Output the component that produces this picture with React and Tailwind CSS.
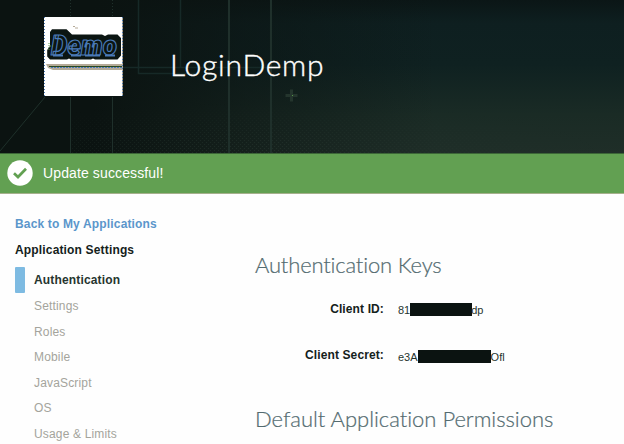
const links = ["Settings", "Roles", "Mobile", "JavaScript", "OS", "Usage & Limits"];

function DemoLogo() {
  return (
    <svg width="79" height="79" viewBox="0 0 79 79" className="block bg-white">
      <path d="M8 12.300H22.500L28 17.500H58L61 19L64 17.500H73.500L77 21V38.500L73.500 42.500H51L49 41.500L47 42.500H27L25 41.500L23 42.500H6L3.200 39.500V33L6 29V15z" fill="#0b1512" />
      <g fontFamily='"Roboto", sans-serif' fontWeight="900" fontStyle="italic">
        <text x="7" y="37.500" fontSize="28" textLength="66" lengthAdjust="spacingAndGlyphs" fill="#0b1512" stroke="#4a7ab8" strokeWidth="1.200" strokeLinejoin="round">Demo</text>
      </g>
      <path d="M9 38.500h10M27 38.500h10M41 38.500h15M61 38.500h10" stroke="#4a7ab8" strokeWidth="2" />
      <path d="M5 26v8M6 29h3" stroke="#569646" strokeDasharray="1 1" />
      <path d="M29 9.500h2M31 11h3" stroke="#b5aa98" />
      <path d="M2 47h76v6H9l-5-2z" fill="#b5aa98" />
      <path d="M5 49.500h73" stroke="#28491f" />
      <path d="M7 50.500h71" stroke="#4a7ab8" strokeDasharray="2 1" />
      <path d="M78.500 0v79" stroke="#b5aa98" />
      <path d="M.5 0v79M78.500 0v79" stroke="#4a7ab8" strokeDasharray="1 2" />
    </svg>
  );
}

function HeaderArt() {
  return (
    <svg width="624" height="153" className="absolute inset-0">
      <defs>
        <linearGradient id="depth" x1="0" y1="0" x2="0" y2="1">
          <stop offset="0" stopColor="#0b1616" />
          <stop offset=".15" stopColor="#0e1f20" />
          <stop offset=".42" stopColor="#0f2121" />
          <stop offset=".75" stopColor="#1a2b25" />
          <stop offset="1" stopColor="#1f2e28" />
        </linearGradient>
        <linearGradient id="shade" x1="0" y1="0" x2="1" y2="0">
          <stop offset=".15" stopColor="#0b1311" />
          <stop offset=".4" stopColor="#0b1311" stopOpacity=".5" />
          <stop offset=".7" stopColor="#0b1311" stopOpacity="0" />
        </linearGradient>
        <pattern id="grain" width="4" height="4" patternUnits="userSpaceOnUse">
          <path d="M0 0h1v1H0zM2 2h1v1H2z" fill="#2a3b33" />
        </pattern>
        <radialGradient id="glow" cx=".35" cy="1" r=".6">
          <stop offset="0" stopColor="#999" />
          <stop offset="1" stopColor="#000" />
        </radialGradient>
        <mask id="grainMask">
          <rect x="70" y="70" width="554" height="83" fill="url(#glow)" />
        </mask>
      </defs>
      <rect width="624" height="153" fill="url(#depth)" />
      <rect width="624" height="153" fill="url(#shade)" />
      <rect width="624" height="153" fill="url(#grain)" mask="url(#grainMask)" />
      <g fill="none" stroke="#1f302b">
        <path d="M70.500 97v56M112.500 97v56M0 151L45 97" />
        <path d="M70.500 0v16M112.500 0v16" strokeDasharray="1 2" />
        <path d="M138.500 0v73.500H200M180.500 0v67M123 67.500h172" stroke="#162927" strokeWidth="1.500" />
        <path d="M229 0v153M271 0v153" strokeWidth="2" />
        <path d="M285.500 95.500h12M291.500 89.500v12" stroke="#24352d" strokeWidth="3" />
      </g>
      <path d="M292 95h1v1h-1z" fill="#569646" />
    </svg>
  );
}

function KeyRow({ label, labelClass, start, end, barClass }) {
  return (
    <div className="flex h-[47px] items-start">
      <div className={`w-[129px] text-right text-[12px] font-bold tracking-[0.120px] text-[#14211b] ${labelClass}`}>{label}</div>
      <div className="flex pt-[2px] pl-[14px] text-[11px] leading-[17px] text-[#26352f]">
        <span>{start}</span>
        <span className={barClass} />
        <span>{end}</span>
      </div>
    </div>
  );
}

export default function App() {
  return (
    <div className="h-[444px] w-[624px] overflow-hidden bg-[#fefefe] font-['Liberation_Sans',Arial,sans-serif]">
      <header className="relative h-[153px] bg-[#0b1311]">
        <HeaderArt />
        <div className="relative flex pt-[17px] pl-[44px]">
          <DemoLogo />
          <h1 className="mt-[27px] ml-[47px] font-['Lato',sans-serif] text-[30px] leading-[40px] font-light tracking-[0.750px] whitespace-nowrap text-white [-webkit-text-stroke:0.4px_white]">LoginDemp</h1>
        </div>
      </header>
      <div className="flex h-[41px] items-center border-t border-b border-t-[#3c6637] border-b-[#a5b08c] bg-[#62a052] pl-[7px] text-[14px] text-white">
        <svg width="26" height="26" viewBox="0 0 26 26" className="mb-[2px]">
          <circle cx="13" cy="13" r="12.700" fill="white" />
          <path d="M7 13.200L11 17L19 8.800" fill="none" stroke="#62a052" strokeWidth="2.700" />
        </svg>
        <span className="ml-[10px] tracking-[0.120px]">Update successful!</span>
      </div>
      <main className="flex">
        <nav className="w-[255px] pt-[22px] pl-[15px] text-[12px] leading-[16px] tracking-[0.160px]">
          <a className="block font-bold text-[#5b96cb]">Back to My Applications</a>
          <div className="mt-[10px] font-bold text-[#14211b]">Application Settings</div>
          <div className="mt-[9px] flex h-[26px] items-center font-bold text-[#26352f]">
            <span className="mr-[9px] h-[26px] w-[10px] rounded-[1px] bg-[#7ebbe2]" />
            Authentication
          </div>
          <ul className="pl-[19px] text-[#a4a49c]">
            {links.map((link) => (
              <li key={link} className="h-[25.600px] leading-[26px]">{link}</li>
            ))}
          </ul>
        </nav>
        <section className="pt-[56px] whitespace-nowrap">
          <h2 className="h-[50px] font-['Lato',sans-serif] text-[22px] leading-[30px] font-light tracking-[-0.180px] text-[#536b70] [-webkit-text-stroke:0.2px_#536b70]">Authentication Keys</h2>
          <KeyRow label="Client ID:" labelClass="leading-[18px]" start="81" end="dp" barClass="mt-[1px] -mr-px h-[13px] w-[62px] bg-[#0b1311]" />
          <KeyRow label="Client Secret:" labelClass="leading-[17px]" start="e3A" end="Ofl" barClass="mt-[1px] h-[13px] w-[73px] bg-[#0b1311]" />
          <h2 className="mt-[10px] font-['Lato',sans-serif] text-[22px] leading-[30px] font-light tracking-[-0.020px] text-[#536b70] [-webkit-text-stroke:0.2px_#536b70]">Default Application Permissions</h2>
        </section>
      </main>
    </div>
  );
}
